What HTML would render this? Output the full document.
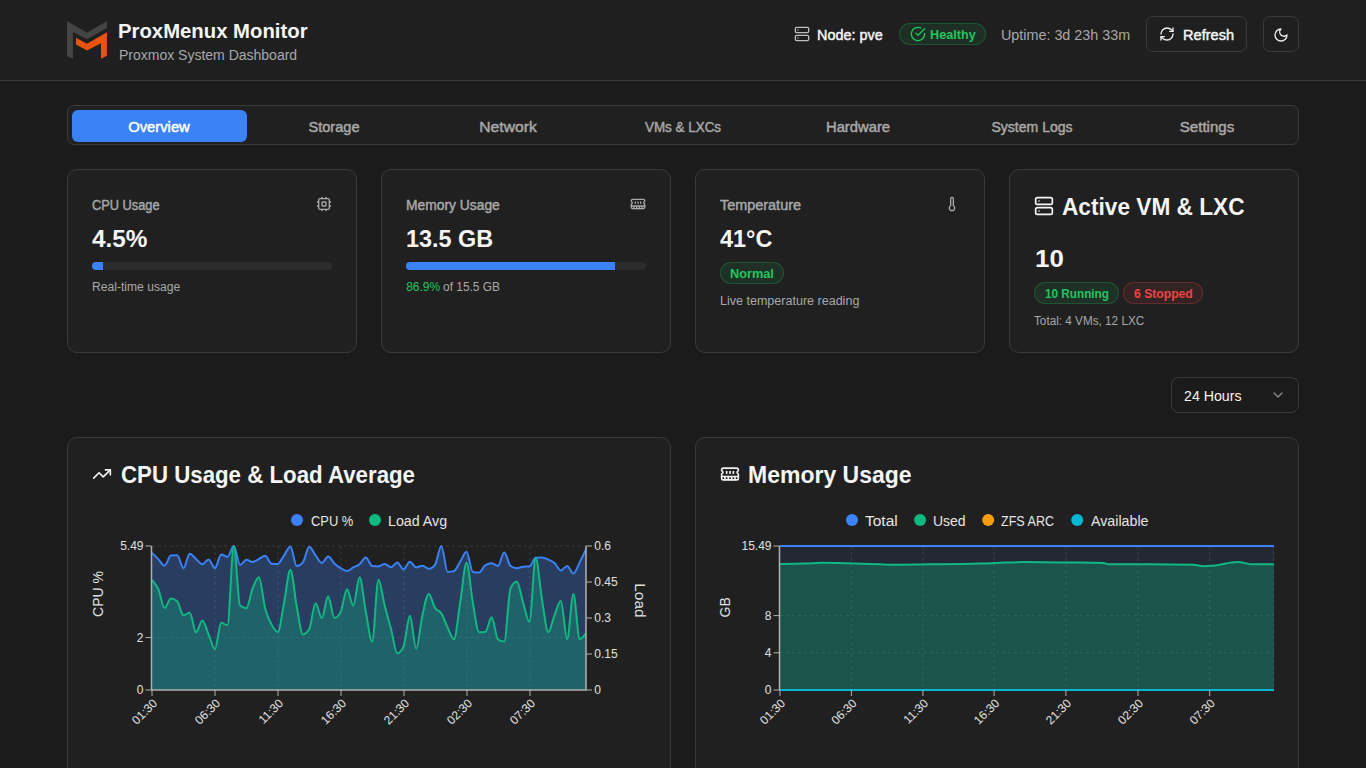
<!DOCTYPE html>
<html><head><meta charset="utf-8"><title>ProxMenux Monitor</title>
<style>
html,body{margin:0;padding:0;width:1366px;height:768px;overflow:hidden;background:#1b1b1b;}
body{position:relative;font-family:"Liberation Sans",sans-serif;}
.b{position:absolute;box-sizing:border-box;}
.t{position:absolute;white-space:nowrap;}
</style></head><body>
<div class="b" style="left:0;top:0;width:1366px;height:81px;background:#1f1f1f;border-bottom:1px solid #3a3a3a"></div>
<svg style="position:absolute;left:0;top:0" width="140" height="80"><polygon points="67,20.9 87,32.7 106.9,20.9 106.9,28 87,39.3 72.9,31.9 72.9,58.8 67,56.1" fill="#444444"/><polygon points="76,37.7 87,43.75 106.9,32.3 106.9,55.7 101,58.8 101,43.2 87,50.6 76,44.4" fill="#ea530f"/></svg>
<svg style="position:absolute;left:794px;top:26px" width="16" height="16" viewBox="0 0 24 24" fill="none" stroke="#bdbdbd" stroke-width="2" stroke-linecap="round" stroke-linejoin="round"><rect width="20" height="8" x="2" y="2" rx="2" ry="2"/><rect width="20" height="8" x="2" y="14" rx="2" ry="2"/><line x1="6" x2="6.01" y1="6" y2="6"/><line x1="6" x2="6.01" y1="18" y2="18"/></svg>
<div class="b" style="left:899px;top:23px;width:87px;height:22px;background:rgba(34,197,94,0.10);border:1px solid rgba(34,197,94,0.25);border-radius:11px;"></div>
<svg style="position:absolute;left:909.8px;top:25.9px" width="16" height="16" viewBox="0 0 24 24" fill="none" stroke="#22c55e" stroke-width="2" stroke-linecap="round" stroke-linejoin="round"><path d="M22 11.08V12a10 10 0 1 1-5.93-9.14"/><polyline points="22 4 12 14.01 9 11.01"/></svg>
<div class="b" style="left:1146px;top:16px;width:101px;height:36px;background:#1f1f1f;border:1px solid #3a3a3a;border-radius:7px;"></div>
<svg style="position:absolute;left:1159px;top:26.4px" width="16" height="16" viewBox="0 0 24 24" fill="none" stroke="#f0f0f0" stroke-width="2" stroke-linecap="round" stroke-linejoin="round"><path d="M3 12a9 9 0 0 1 9-9 9.75 9.75 0 0 1 6.74 2.74L21 8"/><path d="M21 3v5h-5"/><path d="M21 12a9 9 0 0 1-9 9 9.75 9.75 0 0 1-6.74-2.74L3 16"/><path d="M8 16H3v5"/></svg>
<div class="b" style="left:1263px;top:16px;width:36px;height:36px;background:#1f1f1f;border:1px solid #3a3a3a;border-radius:7px;"></div>
<svg style="position:absolute;left:1273.3px;top:26.9px" width="16" height="16" viewBox="0 0 24 24" fill="none" stroke="#f0f0f0" stroke-width="2" stroke-linecap="round" stroke-linejoin="round"><path d="M12 3a6 6 0 0 0 9 9 9 9 0 1 1-9-9Z"/></svg>
<div class="b" style="left:67px;top:105px;width:1232px;height:40px;background:#202020;border:1px solid #3a3a3a;border-radius:7px;"></div>
<div class="b" style="left:72px;top:110px;width:175px;height:32px;background:#3b82f6;border-radius:6px"></div>
<div class="b" style="left:67px;top:169px;width:290px;height:184px;background:#202020;border:1px solid #3a3a3a;border-radius:10px;"></div>
<div class="b" style="left:381px;top:169px;width:290px;height:184px;background:#202020;border:1px solid #3a3a3a;border-radius:10px;"></div>
<div class="b" style="left:695px;top:169px;width:290px;height:184px;background:#202020;border:1px solid #3a3a3a;border-radius:10px;"></div>
<div class="b" style="left:1009px;top:169px;width:290px;height:184px;background:#202020;border:1px solid #3a3a3a;border-radius:10px;"></div>
<svg style="position:absolute;left:316.1px;top:196px" width="16" height="16" viewBox="0 0 24 24" fill="none" stroke="#a8a8a8" stroke-width="2" stroke-linecap="round" stroke-linejoin="round"><rect width="16" height="16" x="4" y="4" rx="2"/><rect width="6" height="6" x="9" y="9" rx="1"/><path d="M15 2v2"/><path d="M15 20v2"/><path d="M2 15h2"/><path d="M2 9h2"/><path d="M20 15h2"/><path d="M20 9h2"/><path d="M9 2v2"/><path d="M9 20v2"/></svg>
<svg style="position:absolute;left:630.2px;top:196px" width="16" height="16" viewBox="0 0 24 24" fill="none" stroke="#a8a8a8" stroke-width="2" stroke-linecap="round" stroke-linejoin="round"><path d="M6 19v-3"/><path d="M10 19v-3"/><path d="M14 19v-3"/><path d="M18 19v-3"/><path d="M8 11V9"/><path d="M16 11V9"/><path d="M12 11V9"/><path d="M2 15h20"/><path d="M2 7a2 2 0 0 1 2-2h16a2 2 0 0 1 2 2v1.1a2 2 0 0 0 0 3.837V17a2 2 0 0 1-2 2H4a2 2 0 0 1-2-2v-5.1a2 2 0 0 0 0-3.837Z"/></svg>
<svg style="position:absolute;left:944px;top:196px" width="16" height="16" viewBox="0 0 24 24" fill="none" stroke="#a8a8a8" stroke-width="2" stroke-linecap="round" stroke-linejoin="round"><path d="M14 4v10.54a4 4 0 1 1-4 0V4a2 2 0 0 1 4 0Z"/></svg>
<svg style="position:absolute;left:1034px;top:195.9px" width="20" height="20" viewBox="0 0 24 24" fill="none" stroke="#f5f5f5" stroke-width="2" stroke-linecap="round" stroke-linejoin="round"><rect width="20" height="8" x="2" y="2" rx="2" ry="2"/><rect width="20" height="8" x="2" y="14" rx="2" ry="2"/><line x1="6" x2="6.01" y1="6" y2="6"/><line x1="6" x2="6.01" y1="18" y2="18"/></svg>
<div class="b" style="left:92px;top:262px;width:240px;height:8px;background:#2c2c2c;border-radius:4px;overflow:hidden"><div style="width:11px;height:8px;background:#3b82f6"></div></div>
<div class="b" style="left:406px;top:262px;width:240px;height:8px;background:#2c2c2c;border-radius:4px;overflow:hidden"><div style="width:209px;height:8px;background:#3b82f6"></div></div>
<div class="b" style="left:720px;top:262px;width:64px;height:21.5px;background:rgba(34,197,94,0.10);border:1px solid rgba(34,197,94,0.25);border-radius:11px;"></div>
<div class="b" style="left:1034px;top:282px;width:85px;height:21.5px;background:rgba(34,197,94,0.10);border:1px solid rgba(34,197,94,0.25);border-radius:11px;"></div>
<div class="b" style="left:1123px;top:282px;width:80px;height:21.5px;background:rgba(239,68,68,0.10);border:1px solid rgba(239,68,68,0.25);border-radius:11px;"></div>
<div class="b" style="left:1171px;top:377px;width:128px;height:36px;background:#1b1b1b;border:1px solid #3a3a3a;border-radius:8px;"></div>
<svg style="position:absolute;left:1269.7px;top:386.7px" width="16" height="16" viewBox="0 0 24 24" fill="none" stroke="#8a8a8a" stroke-width="2" stroke-linecap="round" stroke-linejoin="round"><path d="m6 9 6 6 6-6"/></svg>
<div class="b" style="left:67px;top:437px;width:604px;height:400px;background:#202020;border:1px solid #3a3a3a;border-radius:10px;"></div>
<div class="b" style="left:695px;top:437px;width:604px;height:400px;background:#202020;border:1px solid #3a3a3a;border-radius:10px;"></div>
<svg style="position:absolute;left:92.2px;top:463.8px" width="20" height="20" viewBox="0 0 24 24" fill="none" stroke="#f0f0f0" stroke-width="2" stroke-linecap="round" stroke-linejoin="round"><polyline points="22 7 13.5 15.5 8.5 10.5 2 17"/><polyline points="16 7 22 7 22 13"/></svg>
<svg style="position:absolute;left:720px;top:464px" width="20" height="20" viewBox="0 0 24 24" fill="none" stroke="#f0f0f0" stroke-width="2" stroke-linecap="round" stroke-linejoin="round"><path d="M6 19v-3"/><path d="M10 19v-3"/><path d="M14 19v-3"/><path d="M18 19v-3"/><path d="M8 11V9"/><path d="M16 11V9"/><path d="M12 11V9"/><path d="M2 15h20"/><path d="M2 7a2 2 0 0 1 2-2h16a2 2 0 0 1 2 2v1.1a2 2 0 0 0 0 3.837V17a2 2 0 0 1-2 2H4a2 2 0 0 1-2-2v-5.1a2 2 0 0 0 0-3.837Z"/></svg>
<svg style="position:absolute;left:0;top:0" width="1366" height="768">
<line x1="152" y1="546" x2="586" y2="546" stroke="#3a3a3a" stroke-dasharray="3 3"/>
<line x1="152" y1="637.5" x2="586" y2="637.5" stroke="#3a3a3a" stroke-dasharray="3 3"/>
<line x1="215" y1="546" x2="215" y2="690" stroke="#3a3a3a" stroke-dasharray="3 3"/>
<line x1="278" y1="546" x2="278" y2="690" stroke="#3a3a3a" stroke-dasharray="3 3"/>
<line x1="341" y1="546" x2="341" y2="690" stroke="#3a3a3a" stroke-dasharray="3 3"/>
<line x1="404" y1="546" x2="404" y2="690" stroke="#3a3a3a" stroke-dasharray="3 3"/>
<line x1="467" y1="546" x2="467" y2="690" stroke="#3a3a3a" stroke-dasharray="3 3"/>
<line x1="530" y1="546" x2="530" y2="690" stroke="#3a3a3a" stroke-dasharray="3 3"/>
<line x1="586" y1="546" x2="586" y2="690" stroke="#3a3a3a" stroke-dasharray="3 3"/>
<path d="M152.00,552.90C154.10,554.92,156.19,556.95,158.29,559.10C160.39,561.25,162.48,565.80,164.58,565.80C166.68,565.80,168.77,555.87,170.87,555.60C172.97,555.33,175.06,555.20,177.16,555.20C179.26,555.20,181.35,568.20,183.45,568.20C185.55,568.20,187.64,553.70,189.74,553.70C191.84,553.70,193.93,557.15,196.03,558.90C198.13,560.65,200.22,564.20,202.32,564.20C204.42,564.20,206.51,559.40,208.61,559.40C210.71,559.40,212.80,568.20,214.90,568.20C217.00,568.20,219.09,554.50,221.19,554.50C223.29,554.50,225.38,556.90,227.48,556.90C229.57,556.90,231.67,546.10,233.77,546.10C235.86,546.10,237.96,565.00,240.06,565.00C242.15,565.00,244.25,559.70,246.35,559.70C248.44,559.70,250.54,562.10,252.64,562.10C254.73,562.10,256.83,560.05,258.93,559.00C261.02,557.95,263.12,555.80,265.22,555.80C267.31,555.80,269.41,563.57,271.51,563.70C273.60,563.83,275.70,563.90,277.80,563.90C279.89,563.90,281.99,558.20,284.09,555.30C286.18,552.40,288.28,546.50,290.38,546.50C292.47,546.50,294.57,566.10,296.67,566.10C298.76,566.10,300.86,564.83,302.96,562.30C305.05,559.77,307.15,546.80,309.25,546.80C311.34,546.80,313.44,552.62,315.54,555.30C317.63,557.98,319.73,562.90,321.83,562.90C323.92,562.90,326.02,556.60,328.12,556.60C330.21,556.60,332.31,561.47,334.41,563.40C336.50,565.33,338.60,566.93,340.70,568.20C342.79,569.47,344.89,571.00,346.99,571.00C349.08,571.00,351.18,568.53,353.28,567.40C355.37,566.27,357.47,565.85,359.57,564.20C361.66,562.55,363.76,557.50,365.86,557.50C367.95,557.50,370.05,565.73,372.14,566.00C374.24,566.27,376.34,566.40,378.43,566.40C380.53,566.40,382.63,564.00,384.72,564.00C386.82,564.00,388.92,567.20,391.01,567.20C393.11,567.20,395.21,562.40,397.30,562.40C399.40,562.40,401.50,569.40,403.59,569.40C405.69,569.40,407.79,561.80,409.88,561.80C411.98,561.80,414.08,567.40,416.17,567.40C418.27,567.40,420.37,565.70,422.46,565.70C424.56,565.70,426.66,568.90,428.75,568.90C430.85,568.90,432.95,567.57,435.04,564.90C437.14,562.23,439.24,545.90,441.33,545.90C443.43,545.90,445.53,571.90,447.62,571.90C449.72,571.90,451.82,571.63,453.91,571.10C456.01,570.57,458.11,565.02,460.20,561.80C462.30,558.58,464.40,551.80,466.49,551.80C468.59,551.80,470.69,571.60,472.78,572.00C474.88,572.40,476.98,572.60,479.07,572.60C481.17,572.60,483.27,566.30,485.36,565.10C487.46,563.90,489.56,563.30,491.65,563.30C493.75,563.30,495.85,565.90,497.94,565.90C500.04,565.90,502.14,552.60,504.23,552.60C506.33,552.60,508.43,564.53,510.52,566.00C512.62,567.47,514.71,568.20,516.81,568.20C518.91,568.20,521.00,566.83,523.10,566.70C525.20,566.57,527.29,566.63,529.39,566.50C531.49,566.37,533.58,557.83,535.68,557.70C537.78,557.57,539.87,557.50,541.97,557.50C544.07,557.50,546.16,558.58,548.26,559.50C550.36,560.42,552.45,561.18,554.55,563.00C556.65,564.82,558.74,570.40,560.84,570.40C562.94,570.40,565.03,565.90,567.13,565.90C569.23,565.90,571.32,573.60,573.42,573.60C575.52,573.60,577.61,566.35,579.71,562.30C581.81,558.25,583.90,553.77,586.00,549.30L586,690.0L152,690.0Z" fill="#3b82f6" fill-opacity="0.3"/>
<path d="M152.00,579.80C154.10,582.15,156.19,584.50,158.29,589.20C160.39,593.90,162.48,608.00,164.58,608.00C166.68,608.00,168.77,598.60,170.87,598.60C172.97,598.60,175.06,599.50,177.16,601.30C179.26,603.10,181.35,615.30,183.45,615.30C185.55,615.30,187.64,612.70,189.74,612.70C191.84,612.70,193.93,632.20,196.03,632.20C198.13,632.20,200.22,620.50,202.32,620.50C204.42,620.50,206.51,629.73,208.61,634.50C210.71,639.27,212.80,649.10,214.90,649.10C217.00,649.10,219.09,622.80,221.19,622.80C223.29,622.80,225.38,625.20,227.48,625.20C229.57,625.20,231.67,545.90,233.77,545.90C235.86,545.90,237.96,603.80,240.06,605.60C242.15,607.40,244.25,608.30,246.35,608.30C248.44,608.30,250.54,593.58,252.64,588.40C254.73,583.22,256.83,577.20,258.93,577.20C261.02,577.20,263.12,600.93,265.22,608.80C267.31,616.67,269.41,620.50,271.51,624.40C273.60,628.30,275.70,632.20,277.80,632.20C279.89,632.20,281.99,612.92,284.09,602.50C286.18,592.08,288.28,569.70,290.38,569.70C292.47,569.70,294.57,595.20,296.67,606.00C298.76,616.80,300.86,634.50,302.96,634.50C305.05,634.50,307.15,632.70,309.25,629.10C311.34,625.50,313.44,603.30,315.54,603.30C317.63,603.30,319.73,618.10,321.83,618.10C323.92,618.10,326.02,596.30,328.12,596.30C330.21,596.30,332.31,618.10,334.41,618.10C336.50,618.10,338.60,616.03,340.70,611.90C342.79,607.77,344.89,589.20,346.99,589.20C349.08,589.20,351.18,605.60,353.28,605.60C355.37,605.60,357.47,577.20,359.57,577.20C361.66,577.20,363.76,601.27,365.86,612.00C367.95,622.73,370.05,641.60,372.14,641.60C374.24,641.60,376.34,579.80,378.43,579.80C380.53,579.80,382.63,597.38,384.72,605.60C386.82,613.82,388.92,621.15,391.01,629.10C393.11,637.05,395.21,653.30,397.30,653.30C399.40,653.30,401.50,650.97,403.59,646.30C405.69,641.63,407.79,615.80,409.88,615.80C411.98,615.80,414.08,648.60,416.17,648.60C418.27,648.60,420.37,624.12,422.46,615.00C424.56,605.88,426.66,593.90,428.75,593.90C430.85,593.90,432.95,604.75,435.04,608.00C437.14,611.25,439.24,610.15,441.33,613.40C443.43,616.65,445.53,623.20,447.62,627.50C449.72,631.80,451.82,639.20,453.91,639.20C456.01,639.20,458.11,615.25,460.20,602.50C462.30,589.75,464.40,562.70,466.49,562.70C468.59,562.70,470.69,590.92,472.78,602.50C474.88,614.08,476.98,632.20,479.07,632.20C481.17,632.20,483.27,632.10,485.36,631.90C487.46,631.70,489.56,617.30,491.65,617.30C493.75,617.30,495.85,637.60,497.94,639.20C500.04,640.80,502.14,641.60,504.23,641.60C506.33,641.60,508.43,593.07,510.52,588.40C512.62,583.73,514.71,581.40,516.81,581.40C518.91,581.40,521.00,595.73,523.10,602.50C525.20,609.27,527.29,622.00,529.39,622.00C531.49,622.00,533.58,558.00,535.68,558.00C537.78,558.00,539.87,587.03,541.97,599.40C544.07,611.77,546.16,632.20,548.26,632.20C550.36,632.20,552.45,620.20,554.55,615.00C556.65,609.80,558.74,601.00,560.84,601.00C562.94,601.00,565.03,639.20,567.13,639.20C569.23,639.20,571.32,593.90,573.42,593.90C575.52,593.90,577.61,639.20,579.71,639.20C581.81,639.20,583.90,636.10,586.00,633.00L586,690.0L152,690.0Z" fill="#10b981" fill-opacity="0.3"/>
<path d="M152.00,552.90C154.10,554.92,156.19,556.95,158.29,559.10C160.39,561.25,162.48,565.80,164.58,565.80C166.68,565.80,168.77,555.87,170.87,555.60C172.97,555.33,175.06,555.20,177.16,555.20C179.26,555.20,181.35,568.20,183.45,568.20C185.55,568.20,187.64,553.70,189.74,553.70C191.84,553.70,193.93,557.15,196.03,558.90C198.13,560.65,200.22,564.20,202.32,564.20C204.42,564.20,206.51,559.40,208.61,559.40C210.71,559.40,212.80,568.20,214.90,568.20C217.00,568.20,219.09,554.50,221.19,554.50C223.29,554.50,225.38,556.90,227.48,556.90C229.57,556.90,231.67,546.10,233.77,546.10C235.86,546.10,237.96,565.00,240.06,565.00C242.15,565.00,244.25,559.70,246.35,559.70C248.44,559.70,250.54,562.10,252.64,562.10C254.73,562.10,256.83,560.05,258.93,559.00C261.02,557.95,263.12,555.80,265.22,555.80C267.31,555.80,269.41,563.57,271.51,563.70C273.60,563.83,275.70,563.90,277.80,563.90C279.89,563.90,281.99,558.20,284.09,555.30C286.18,552.40,288.28,546.50,290.38,546.50C292.47,546.50,294.57,566.10,296.67,566.10C298.76,566.10,300.86,564.83,302.96,562.30C305.05,559.77,307.15,546.80,309.25,546.80C311.34,546.80,313.44,552.62,315.54,555.30C317.63,557.98,319.73,562.90,321.83,562.90C323.92,562.90,326.02,556.60,328.12,556.60C330.21,556.60,332.31,561.47,334.41,563.40C336.50,565.33,338.60,566.93,340.70,568.20C342.79,569.47,344.89,571.00,346.99,571.00C349.08,571.00,351.18,568.53,353.28,567.40C355.37,566.27,357.47,565.85,359.57,564.20C361.66,562.55,363.76,557.50,365.86,557.50C367.95,557.50,370.05,565.73,372.14,566.00C374.24,566.27,376.34,566.40,378.43,566.40C380.53,566.40,382.63,564.00,384.72,564.00C386.82,564.00,388.92,567.20,391.01,567.20C393.11,567.20,395.21,562.40,397.30,562.40C399.40,562.40,401.50,569.40,403.59,569.40C405.69,569.40,407.79,561.80,409.88,561.80C411.98,561.80,414.08,567.40,416.17,567.40C418.27,567.40,420.37,565.70,422.46,565.70C424.56,565.70,426.66,568.90,428.75,568.90C430.85,568.90,432.95,567.57,435.04,564.90C437.14,562.23,439.24,545.90,441.33,545.90C443.43,545.90,445.53,571.90,447.62,571.90C449.72,571.90,451.82,571.63,453.91,571.10C456.01,570.57,458.11,565.02,460.20,561.80C462.30,558.58,464.40,551.80,466.49,551.80C468.59,551.80,470.69,571.60,472.78,572.00C474.88,572.40,476.98,572.60,479.07,572.60C481.17,572.60,483.27,566.30,485.36,565.10C487.46,563.90,489.56,563.30,491.65,563.30C493.75,563.30,495.85,565.90,497.94,565.90C500.04,565.90,502.14,552.60,504.23,552.60C506.33,552.60,508.43,564.53,510.52,566.00C512.62,567.47,514.71,568.20,516.81,568.20C518.91,568.20,521.00,566.83,523.10,566.70C525.20,566.57,527.29,566.63,529.39,566.50C531.49,566.37,533.58,557.83,535.68,557.70C537.78,557.57,539.87,557.50,541.97,557.50C544.07,557.50,546.16,558.58,548.26,559.50C550.36,560.42,552.45,561.18,554.55,563.00C556.65,564.82,558.74,570.40,560.84,570.40C562.94,570.40,565.03,565.90,567.13,565.90C569.23,565.90,571.32,573.60,573.42,573.60C575.52,573.60,577.61,566.35,579.71,562.30C581.81,558.25,583.90,553.77,586.00,549.30" fill="none" stroke="#3b82f6" stroke-width="2"/>
<path d="M152.00,579.80C154.10,582.15,156.19,584.50,158.29,589.20C160.39,593.90,162.48,608.00,164.58,608.00C166.68,608.00,168.77,598.60,170.87,598.60C172.97,598.60,175.06,599.50,177.16,601.30C179.26,603.10,181.35,615.30,183.45,615.30C185.55,615.30,187.64,612.70,189.74,612.70C191.84,612.70,193.93,632.20,196.03,632.20C198.13,632.20,200.22,620.50,202.32,620.50C204.42,620.50,206.51,629.73,208.61,634.50C210.71,639.27,212.80,649.10,214.90,649.10C217.00,649.10,219.09,622.80,221.19,622.80C223.29,622.80,225.38,625.20,227.48,625.20C229.57,625.20,231.67,545.90,233.77,545.90C235.86,545.90,237.96,603.80,240.06,605.60C242.15,607.40,244.25,608.30,246.35,608.30C248.44,608.30,250.54,593.58,252.64,588.40C254.73,583.22,256.83,577.20,258.93,577.20C261.02,577.20,263.12,600.93,265.22,608.80C267.31,616.67,269.41,620.50,271.51,624.40C273.60,628.30,275.70,632.20,277.80,632.20C279.89,632.20,281.99,612.92,284.09,602.50C286.18,592.08,288.28,569.70,290.38,569.70C292.47,569.70,294.57,595.20,296.67,606.00C298.76,616.80,300.86,634.50,302.96,634.50C305.05,634.50,307.15,632.70,309.25,629.10C311.34,625.50,313.44,603.30,315.54,603.30C317.63,603.30,319.73,618.10,321.83,618.10C323.92,618.10,326.02,596.30,328.12,596.30C330.21,596.30,332.31,618.10,334.41,618.10C336.50,618.10,338.60,616.03,340.70,611.90C342.79,607.77,344.89,589.20,346.99,589.20C349.08,589.20,351.18,605.60,353.28,605.60C355.37,605.60,357.47,577.20,359.57,577.20C361.66,577.20,363.76,601.27,365.86,612.00C367.95,622.73,370.05,641.60,372.14,641.60C374.24,641.60,376.34,579.80,378.43,579.80C380.53,579.80,382.63,597.38,384.72,605.60C386.82,613.82,388.92,621.15,391.01,629.10C393.11,637.05,395.21,653.30,397.30,653.30C399.40,653.30,401.50,650.97,403.59,646.30C405.69,641.63,407.79,615.80,409.88,615.80C411.98,615.80,414.08,648.60,416.17,648.60C418.27,648.60,420.37,624.12,422.46,615.00C424.56,605.88,426.66,593.90,428.75,593.90C430.85,593.90,432.95,604.75,435.04,608.00C437.14,611.25,439.24,610.15,441.33,613.40C443.43,616.65,445.53,623.20,447.62,627.50C449.72,631.80,451.82,639.20,453.91,639.20C456.01,639.20,458.11,615.25,460.20,602.50C462.30,589.75,464.40,562.70,466.49,562.70C468.59,562.70,470.69,590.92,472.78,602.50C474.88,614.08,476.98,632.20,479.07,632.20C481.17,632.20,483.27,632.10,485.36,631.90C487.46,631.70,489.56,617.30,491.65,617.30C493.75,617.30,495.85,637.60,497.94,639.20C500.04,640.80,502.14,641.60,504.23,641.60C506.33,641.60,508.43,593.07,510.52,588.40C512.62,583.73,514.71,581.40,516.81,581.40C518.91,581.40,521.00,595.73,523.10,602.50C525.20,609.27,527.29,622.00,529.39,622.00C531.49,622.00,533.58,558.00,535.68,558.00C537.78,558.00,539.87,587.03,541.97,599.40C544.07,611.77,546.16,632.20,548.26,632.20C550.36,632.20,552.45,620.20,554.55,615.00C556.65,609.80,558.74,601.00,560.84,601.00C562.94,601.00,565.03,639.20,567.13,639.20C569.23,639.20,571.32,593.90,573.42,593.90C575.52,593.90,577.61,639.20,579.71,639.20C581.81,639.20,583.90,636.10,586.00,633.00" fill="none" stroke="#10b981" stroke-width="2"/>
<path d="M151.5,546V690H586.5M586,546V690" fill="none" stroke="#b0b0b0" stroke-width="1.5"/>
<line x1="145.5" y1="546" x2="151.5" y2="546" stroke="#b0b0b0"/>
<text x="143.5" y="550.2" text-anchor="end" fill="#e0e0e0" style="font-family:'Liberation Sans',sans-serif;font-size:12px">5.49</text>
<line x1="145.5" y1="637.5" x2="151.5" y2="637.5" stroke="#b0b0b0"/>
<text x="143.5" y="641.7" text-anchor="end" fill="#e0e0e0" style="font-family:'Liberation Sans',sans-serif;font-size:12px">2</text>
<line x1="145.5" y1="690" x2="151.5" y2="690" stroke="#b0b0b0"/>
<text x="143.5" y="694.2" text-anchor="end" fill="#e0e0e0" style="font-family:'Liberation Sans',sans-serif;font-size:12px">0</text>
<line x1="586" y1="546" x2="592" y2="546" stroke="#b0b0b0"/>
<text x="594.3" y="550.2" fill="#e0e0e0" style="font-family:'Liberation Sans',sans-serif;font-size:12px">0.6</text>
<line x1="586" y1="582" x2="592" y2="582" stroke="#b0b0b0"/>
<text x="594.3" y="586.2" fill="#e0e0e0" style="font-family:'Liberation Sans',sans-serif;font-size:12px">0.45</text>
<line x1="586" y1="618" x2="592" y2="618" stroke="#b0b0b0"/>
<text x="594.3" y="622.2" fill="#e0e0e0" style="font-family:'Liberation Sans',sans-serif;font-size:12px">0.3</text>
<line x1="586" y1="654" x2="592" y2="654" stroke="#b0b0b0"/>
<text x="594.3" y="658.2" fill="#e0e0e0" style="font-family:'Liberation Sans',sans-serif;font-size:12px">0.15</text>
<line x1="586" y1="690" x2="592" y2="690" stroke="#b0b0b0"/>
<text x="594.3" y="694.2" fill="#e0e0e0" style="font-family:'Liberation Sans',sans-serif;font-size:12px">0</text>
<line x1="152" y1="690" x2="152" y2="696" stroke="#b0b0b0"/>
<text transform="translate(158,704) rotate(-45)" text-anchor="end" fill="#e0e0e0" style="font-family:'Liberation Sans',sans-serif;font-size:12px">01:30</text>
<line x1="215" y1="690" x2="215" y2="696" stroke="#b0b0b0"/>
<text transform="translate(221,704) rotate(-45)" text-anchor="end" fill="#e0e0e0" style="font-family:'Liberation Sans',sans-serif;font-size:12px">06:30</text>
<line x1="278" y1="690" x2="278" y2="696" stroke="#b0b0b0"/>
<text transform="translate(284,704) rotate(-45)" text-anchor="end" fill="#e0e0e0" style="font-family:'Liberation Sans',sans-serif;font-size:12px">11:30</text>
<line x1="341" y1="690" x2="341" y2="696" stroke="#b0b0b0"/>
<text transform="translate(347,704) rotate(-45)" text-anchor="end" fill="#e0e0e0" style="font-family:'Liberation Sans',sans-serif;font-size:12px">16:30</text>
<line x1="404" y1="690" x2="404" y2="696" stroke="#b0b0b0"/>
<text transform="translate(410,704) rotate(-45)" text-anchor="end" fill="#e0e0e0" style="font-family:'Liberation Sans',sans-serif;font-size:12px">21:30</text>
<line x1="467" y1="690" x2="467" y2="696" stroke="#b0b0b0"/>
<text transform="translate(473,704) rotate(-45)" text-anchor="end" fill="#e0e0e0" style="font-family:'Liberation Sans',sans-serif;font-size:12px">02:30</text>
<line x1="530" y1="690" x2="530" y2="696" stroke="#b0b0b0"/>
<text transform="translate(536,704) rotate(-45)" text-anchor="end" fill="#e0e0e0" style="font-family:'Liberation Sans',sans-serif;font-size:12px">07:30</text>
<text transform="translate(103,594) rotate(-90)" text-anchor="middle" fill="#e0e0e0" style="font-family:'Liberation Sans',sans-serif;font-size:14px">CPU %</text>
<text transform="translate(634.6,600.4) rotate(90)" text-anchor="middle" fill="#e0e0e0" style="font-family:'Liberation Sans',sans-serif;font-size:15.4px">Load</text>
<circle cx="297" cy="520" r="6" fill="#3b82f6"/>
<circle cx="375" cy="520" r="6" fill="#10b981"/>
<circle cx="852" cy="520" r="6" fill="#3b82f6"/>
<circle cx="920.1" cy="520" r="6" fill="#10b981"/>
<circle cx="988.2" cy="520" r="6" fill="#f59e0b"/>
<circle cx="1077.2" cy="520" r="6" fill="#06b6d4"/>
<line x1="780" y1="546" x2="1274" y2="546" stroke="#3a3a3a" stroke-dasharray="3 3"/>
<line x1="780" y1="615.6" x2="1274" y2="615.6" stroke="#3a3a3a" stroke-dasharray="3 3"/>
<line x1="780" y1="652.8" x2="1274" y2="652.8" stroke="#3a3a3a" stroke-dasharray="3 3"/>
<line x1="851.4" y1="546" x2="851.4" y2="690" stroke="#3a3a3a" stroke-dasharray="3 3"/>
<line x1="922.9" y1="546" x2="922.9" y2="690" stroke="#3a3a3a" stroke-dasharray="3 3"/>
<line x1="994.1" y1="546" x2="994.1" y2="690" stroke="#3a3a3a" stroke-dasharray="3 3"/>
<line x1="1065.9" y1="546" x2="1065.9" y2="690" stroke="#3a3a3a" stroke-dasharray="3 3"/>
<line x1="1138" y1="546" x2="1138" y2="690" stroke="#3a3a3a" stroke-dasharray="3 3"/>
<line x1="1209.7" y1="546" x2="1209.7" y2="690" stroke="#3a3a3a" stroke-dasharray="3 3"/>
<line x1="1273.7" y1="546" x2="1273.7" y2="690" stroke="#3a3a3a" stroke-dasharray="3 3"/>
<rect x="780" y="546" width="494" height="144.0" fill="#3b82f6" fill-opacity="0.1"/>
<path d="M780.00,564.00C788.33,563.93,796.67,563.87,805.00,563.60C810.67,563.42,816.33,562.80,822.00,562.80C831.33,562.80,840.67,563.08,850.00,563.30C860.00,563.54,870.00,563.75,880.00,564.20C883.33,564.35,886.67,564.70,890.00,564.70C903.33,564.70,916.67,564.43,930.00,564.30C940.00,564.20,950.00,564.16,960.00,564.00C966.67,563.89,973.33,563.80,980.00,563.60C986.67,563.40,993.33,563.03,1000.00,562.80C1008.33,562.51,1016.67,562.10,1025.00,562.10C1036.67,562.10,1048.33,562.33,1060.00,562.40C1067.00,562.44,1074.00,562.43,1081.00,562.50C1088.47,562.57,1095.93,562.67,1103.40,563.00C1105.27,563.08,1107.13,564.30,1109.00,564.30C1122.67,564.30,1136.33,564.30,1150.00,564.30C1164.33,564.30,1178.67,564.43,1193.00,564.70C1196.73,564.77,1200.47,566.20,1204.20,566.20C1206.70,566.20,1209.20,565.99,1211.70,565.80C1220.40,565.15,1229.10,561.90,1237.80,561.90C1242.77,561.90,1247.73,564.30,1252.70,564.30C1259.73,564.30,1266.77,564.30,1273.80,564.30L1274,690.0L780,690.0Z" fill="#10b981" fill-opacity="0.3"/>
<line x1="780" y1="546" x2="1274" y2="546" stroke="#3b82f6" stroke-width="2"/>
<path d="M780.00,564.00C788.33,563.93,796.67,563.87,805.00,563.60C810.67,563.42,816.33,562.80,822.00,562.80C831.33,562.80,840.67,563.08,850.00,563.30C860.00,563.54,870.00,563.75,880.00,564.20C883.33,564.35,886.67,564.70,890.00,564.70C903.33,564.70,916.67,564.43,930.00,564.30C940.00,564.20,950.00,564.16,960.00,564.00C966.67,563.89,973.33,563.80,980.00,563.60C986.67,563.40,993.33,563.03,1000.00,562.80C1008.33,562.51,1016.67,562.10,1025.00,562.10C1036.67,562.10,1048.33,562.33,1060.00,562.40C1067.00,562.44,1074.00,562.43,1081.00,562.50C1088.47,562.57,1095.93,562.67,1103.40,563.00C1105.27,563.08,1107.13,564.30,1109.00,564.30C1122.67,564.30,1136.33,564.30,1150.00,564.30C1164.33,564.30,1178.67,564.43,1193.00,564.70C1196.73,564.77,1200.47,566.20,1204.20,566.20C1206.70,566.20,1209.20,565.99,1211.70,565.80C1220.40,565.15,1229.10,561.90,1237.80,561.90C1242.77,561.90,1247.73,564.30,1252.70,564.30C1259.73,564.30,1266.77,564.30,1273.80,564.30" fill="none" stroke="#10b981" stroke-width="2"/>
<path d="M779.5,546V690H1274" fill="none" stroke="#b0b0b0" stroke-width="1.5"/>
<line x1="780" y1="690" x2="1274" y2="690" stroke="#06b6d4" stroke-width="2"/>
<line x1="773.5" y1="546" x2="779.5" y2="546" stroke="#b0b0b0"/>
<text x="771.5" y="550.2" text-anchor="end" fill="#e0e0e0" style="font-family:'Liberation Sans',sans-serif;font-size:12px">15.49</text>
<line x1="773.5" y1="615.6" x2="779.5" y2="615.6" stroke="#b0b0b0"/>
<text x="771.5" y="619.8000000000001" text-anchor="end" fill="#e0e0e0" style="font-family:'Liberation Sans',sans-serif;font-size:12px">8</text>
<line x1="773.5" y1="652.8" x2="779.5" y2="652.8" stroke="#b0b0b0"/>
<text x="771.5" y="657.0" text-anchor="end" fill="#e0e0e0" style="font-family:'Liberation Sans',sans-serif;font-size:12px">4</text>
<line x1="773.5" y1="690" x2="779.5" y2="690" stroke="#b0b0b0"/>
<text x="771.5" y="694.2" text-anchor="end" fill="#e0e0e0" style="font-family:'Liberation Sans',sans-serif;font-size:12px">0</text>
<line x1="780" y1="690" x2="780" y2="696" stroke="#b0b0b0"/>
<text transform="translate(786,704) rotate(-45)" text-anchor="end" fill="#e0e0e0" style="font-family:'Liberation Sans',sans-serif;font-size:12px">01:30</text>
<line x1="851.4" y1="690" x2="851.4" y2="696" stroke="#b0b0b0"/>
<text transform="translate(857.4,704) rotate(-45)" text-anchor="end" fill="#e0e0e0" style="font-family:'Liberation Sans',sans-serif;font-size:12px">06:30</text>
<line x1="922.9" y1="690" x2="922.9" y2="696" stroke="#b0b0b0"/>
<text transform="translate(928.9,704) rotate(-45)" text-anchor="end" fill="#e0e0e0" style="font-family:'Liberation Sans',sans-serif;font-size:12px">11:30</text>
<line x1="994.1" y1="690" x2="994.1" y2="696" stroke="#b0b0b0"/>
<text transform="translate(1000.1,704) rotate(-45)" text-anchor="end" fill="#e0e0e0" style="font-family:'Liberation Sans',sans-serif;font-size:12px">16:30</text>
<line x1="1065.9" y1="690" x2="1065.9" y2="696" stroke="#b0b0b0"/>
<text transform="translate(1071.9,704) rotate(-45)" text-anchor="end" fill="#e0e0e0" style="font-family:'Liberation Sans',sans-serif;font-size:12px">21:30</text>
<line x1="1138" y1="690" x2="1138" y2="696" stroke="#b0b0b0"/>
<text transform="translate(1144,704) rotate(-45)" text-anchor="end" fill="#e0e0e0" style="font-family:'Liberation Sans',sans-serif;font-size:12px">02:30</text>
<line x1="1209.7" y1="690" x2="1209.7" y2="696" stroke="#b0b0b0"/>
<text transform="translate(1215.7,704) rotate(-45)" text-anchor="end" fill="#e0e0e0" style="font-family:'Liberation Sans',sans-serif;font-size:12px">07:30</text>
<text transform="translate(730.2,607.4) rotate(-90)" text-anchor="middle" fill="#e0e0e0" style="font-family:'Liberation Sans',sans-serif;font-size:14px">GB</text>
</svg>
<div id="t_title" class="t" style="left:118.38px;top:20.57px;font-size:20px;line-height:20px;font-weight:700;color:#f5f5f5;transform:scaleX(1.0154);transform-origin:0 0">ProxMenux Monitor</div>
<div id="t_sub" class="t" style="left:118.83px;top:47.95px;font-size:14px;line-height:14px;font-weight:400;color:#a8a8a8;transform:scaleX(0.9997);transform-origin:0 0">Proxmox System Dashboard</div>
<div id="t_node" class="t" style="left:817.18px;top:27.95px;font-size:14px;line-height:14px;font-weight:400;color:#f5f5f5;-webkit-text-stroke:0.45px #f5f5f5;transform:scaleX(1.0286);transform-origin:0 0">Node: pve</div>
<div id="t_healthy" class="t" style="left:929.80px;top:28.07px;font-size:13.5px;line-height:13.5px;font-weight:700;color:#22c55e;transform:scaleX(0.9370);transform-origin:0 0">Healthy</div>
<div id="t_uptime" class="t" style="left:1001.37px;top:28.15px;font-size:14px;line-height:14px;font-weight:400;color:#a8a8a8;transform:scaleX(1.0241);transform-origin:0 0">Uptime: 3d 23h 33m</div>
<div id="t_refresh" class="t" style="left:1183.29px;top:28.15px;font-size:14px;line-height:14px;font-weight:400;color:#f5f5f5;-webkit-text-stroke:0.45px #f5f5f5;transform:scaleX(1.0408);transform-origin:0 0">Refresh</div>
<div id="t_tab0" class="t" style="left:159.29px;top:119.95px;font-size:14px;line-height:14px;font-weight:400;color:#ffffff;-webkit-text-stroke:0.45px #ffffff;transform:translateX(-50%) scaleX(1.0555);transform-origin:50% 0">Overview</div>
<div id="t_tab1" class="t" style="left:333.86px;top:119.95px;font-size:14px;line-height:14px;font-weight:400;color:#a8a8a8;-webkit-text-stroke:0.45px #a8a8a8;transform:translateX(-50%) scaleX(1.0413);transform-origin:50% 0">Storage</div>
<div id="t_tab2" class="t" style="left:508.43px;top:119.95px;font-size:14px;line-height:14px;font-weight:400;color:#a8a8a8;-webkit-text-stroke:0.45px #a8a8a8;transform:translateX(-50%) scaleX(1.1188);transform-origin:50% 0">Network</div>
<div id="t_tab3" class="t" style="left:683.00px;top:119.95px;font-size:14px;line-height:14px;font-weight:400;color:#a8a8a8;-webkit-text-stroke:0.45px #a8a8a8;transform:translateX(-50%) scaleX(0.9597);transform-origin:50% 0">VMs &amp; LXCs</div>
<div id="t_tab4" class="t" style="left:857.57px;top:119.95px;font-size:14px;line-height:14px;font-weight:400;color:#a8a8a8;-webkit-text-stroke:0.45px #a8a8a8;transform:translateX(-50%) scaleX(1.0552);transform-origin:50% 0">Hardware</div>
<div id="t_tab5" class="t" style="left:1032.14px;top:119.95px;font-size:14px;line-height:14px;font-weight:400;color:#a8a8a8;-webkit-text-stroke:0.45px #a8a8a8;transform:translateX(-50%) scaleX(1.0036);transform-origin:50% 0">System Logs</div>
<div id="t_tab6" class="t" style="left:1206.71px;top:119.95px;font-size:14px;line-height:14px;font-weight:400;color:#a8a8a8;-webkit-text-stroke:0.45px #a8a8a8;transform:translateX(-50%) scaleX(1.0794);transform-origin:50% 0">Settings</div>
<div id="t_c1" class="t" style="left:91.86px;top:197.75px;font-size:14px;line-height:14px;font-weight:400;color:#a8a8a8;-webkit-text-stroke:0.45px #a8a8a8;transform:scaleX(0.9130);transform-origin:0 0">CPU Usage</div>
<div id="t_v1" class="t" style="left:92.20px;top:226.78px;font-size:24px;line-height:24px;font-weight:700;color:#f5f5f5;transform:scaleX(1.0144);transform-origin:0 0">4.5%</div>
<div id="t_s1" class="t" style="left:92.20px;top:280.74px;font-size:12px;line-height:12px;font-weight:400;color:#a8a8a8;transform:scaleX(1.0087);transform-origin:0 0">Real-time usage</div>
<div id="t_c2" class="t" style="left:405.80px;top:197.75px;font-size:14px;line-height:14px;font-weight:400;color:#a8a8a8;-webkit-text-stroke:0.45px #a8a8a8;transform:scaleX(0.9878);transform-origin:0 0">Memory Usage</div>
<div id="t_v2" class="t" style="left:406.20px;top:226.78px;font-size:24px;line-height:24px;font-weight:700;color:#f5f5f5;transform:scaleX(0.9749);transform-origin:0 0">13.5 GB</div>
<div id="t_s2a" class="t" style="left:406.20px;top:280.74px;font-size:12px;line-height:12px;font-weight:400;color:#22c55e;transform:scaleX(1.0000);transform-origin:0 0">86.9%</div>
<div id="t_s2b" class="t" style="left:443.15px;top:280.74px;font-size:12px;line-height:12px;font-weight:400;color:#a8a8a8;transform:scaleX(0.9947);transform-origin:0 0">of 15.5 GB</div>
<div id="t_c3" class="t" style="left:719.96px;top:197.75px;font-size:14px;line-height:14px;font-weight:400;color:#a8a8a8;-webkit-text-stroke:0.45px #a8a8a8;transform:scaleX(1.0304);transform-origin:0 0">Temperature</div>
<div id="t_v3" class="t" style="left:720.00px;top:226.78px;font-size:24px;line-height:24px;font-weight:700;color:#f5f5f5;transform:scaleX(0.9786);transform-origin:0 0">41°C</div>
<div id="t_b3" class="t" style="left:730.22px;top:267.84px;font-size:12px;line-height:12px;font-weight:700;color:#22c55e;transform:scaleX(1.0611);transform-origin:0 0">Normal</div>
<div id="t_s3" class="t" style="left:720.00px;top:294.54px;font-size:12px;line-height:12px;font-weight:400;color:#a8a8a8;transform:scaleX(1.0445);transform-origin:0 0">Live temperature reading</div>
<div id="t_c4" class="t" style="left:1061.70px;top:194.88px;font-size:24px;line-height:24px;font-weight:700;color:#f5f5f5;transform:scaleX(0.9443);transform-origin:0 0">Active VM &amp; LXC</div>
<div id="t_v4" class="t" style="left:1034.80px;top:246.68px;font-size:24px;line-height:24px;font-weight:700;color:#f5f5f5;transform:scaleX(1.0783);transform-origin:0 0">10</div>
<div id="t_b4a" class="t" style="left:1044.57px;top:288.34px;font-size:12px;line-height:12px;font-weight:700;color:#22c55e;transform:scaleX(0.9788);transform-origin:0 0">10 Running</div>
<div id="t_b4b" class="t" style="left:1133.55px;top:288.34px;font-size:12px;line-height:12px;font-weight:700;color:#ef4444;transform:scaleX(1.0138);transform-origin:0 0">6 Stopped</div>
<div id="t_s4" class="t" style="left:1034.00px;top:314.84px;font-size:12px;line-height:12px;font-weight:400;color:#a8a8a8;transform:scaleX(0.9780);transform-origin:0 0">Total: 4 VMs, 12 LXC</div>
<div id="t_sel" class="t" style="left:1184.02px;top:389.15px;font-size:14px;line-height:14px;font-weight:400;color:#f5f5f5;transform:scaleX(1.0124);transform-origin:0 0">24 Hours</div>
<div id="t_ch1" class="t" style="left:121.30px;top:462.78px;font-size:24px;line-height:24px;font-weight:700;color:#f5f5f5;transform:scaleX(0.9275);transform-origin:0 0">CPU Usage &amp; Load Average</div>
<div id="t_ch2" class="t" style="left:747.78px;top:462.98px;font-size:24px;line-height:24px;font-weight:700;color:#f5f5f5;transform:scaleX(0.9580);transform-origin:0 0">Memory Usage</div>
<div id="t_l1" class="t" style="left:310.99px;top:513.85px;font-size:14px;line-height:14px;font-weight:400;color:#e5e5e5;transform:scaleX(0.9207);transform-origin:0 0">CPU %</div>
<div id="t_l2" class="t" style="left:387.86px;top:513.85px;font-size:14px;line-height:14px;font-weight:400;color:#e5e5e5;transform:scaleX(1.0158);transform-origin:0 0">Load Avg</div>
<div id="t_l3" class="t" style="left:865.33px;top:513.85px;font-size:14px;line-height:14px;font-weight:400;color:#e5e5e5;transform:scaleX(1.1062);transform-origin:0 0">Total</div>
<div id="t_l4" class="t" style="left:933.00px;top:513.85px;font-size:14px;line-height:14px;font-weight:400;color:#e5e5e5;transform:scaleX(0.9985);transform-origin:0 0">Used</div>
<div id="t_l5" class="t" style="left:1001.24px;top:513.85px;font-size:14px;line-height:14px;font-weight:400;color:#e5e5e5;transform:scaleX(0.8969);transform-origin:0 0">ZFS ARC</div>
<div id="t_l6" class="t" style="left:1090.55px;top:513.85px;font-size:14px;line-height:14px;font-weight:400;color:#e5e5e5;transform:scaleX(1.0161);transform-origin:0 0">Available</div>
</body></html>
